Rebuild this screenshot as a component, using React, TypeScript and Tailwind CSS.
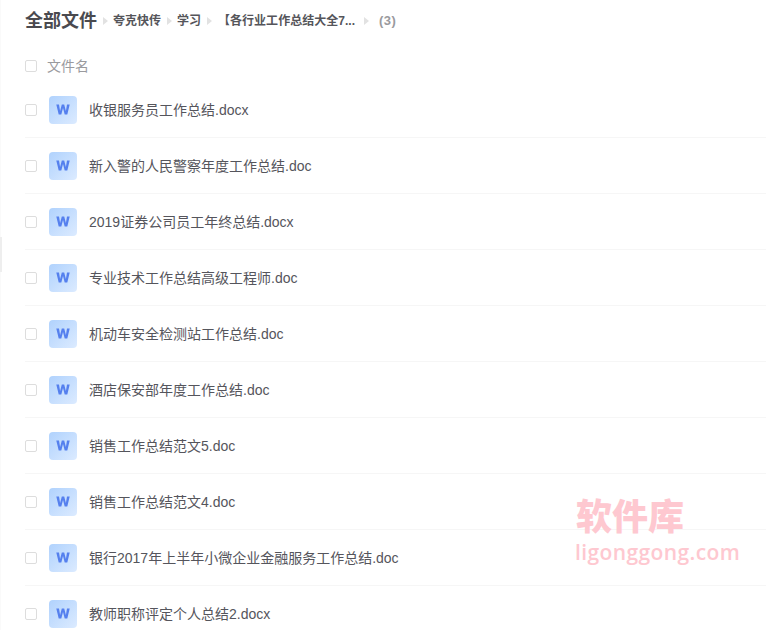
const files = [
  "收银服务员工作总结.docx",
  "新入警的人民警察年度工作总结.doc",
  "2019证券公司员工年终总结.docx",
  "专业技术工作总结高级工程师.doc",
  "机动车安全检测站工作总结.doc",
  "酒店保安部年度工作总结.doc",
  "销售工作总结范文5.doc",
  "销售工作总结范文4.doc",
  "银行2017年上半年小微企业金融服务工作总结.doc",
  "教师职称评定个人总结2.docx",
];

const font = { fontFamily: '"Liberation Sans", "Noto Sans CJK SC", sans-serif' };

function Sep({ className }: { className: string }) {
  return <span className={`h-0 w-0 border-y-[4px] border-l-[5px] border-y-transparent border-l-[#e2e2e2] ${className}`} />;
}

function Box() {
  return <span className="h-3 w-3 shrink-0 rounded-[2px] border border-[#dddddd] bg-white" />;
}

function WordIcon() {
  return (
    <span className="flex h-7 w-7 shrink-0 items-center justify-center rounded-[4px] bg-gradient-to-br from-[#b0d2fd] to-[#dcebff]">
      <svg width="14" height="11" viewBox="0 0 14 11">
        <path d="M0.3 0.5H3L4.1 7L5.8 0.5H8.2L9.9 7L11 0.5H13.7L11.3 10.5H8.7L7 4L5.3 10.5H2.7Z" fill="#5580ee" />
      </svg>
    </span>
  );
}

export default function App() {
  return (
    <div className="relative h-[630px] w-[766px] overflow-hidden bg-white pl-[25px] text-[#555]" style={font}>
      <div className="absolute left-0 top-0 h-full w-[1px] bg-[#fafafa]" />
      <div className="absolute left-0 top-[237px] h-[35px] w-[2px] bg-[#eeeeee]" />
      <div className="flex h-[42px] items-center">
        <span className="text-[18px] font-bold text-[#4a4a4f]">全部文件</span>
        <Sep className="ml-[6px] mr-[5px]" />
        <span className="text-[12px] font-bold text-[#55555a]">夸克快传</span>
        <Sep className="ml-[6px] mr-[5px]" />
        <span className="text-[12px] font-bold text-[#55555a]">学习</span>
        <Sep className="ml-[6px] mr-[6px]" />
        <span className="text-[12px] font-bold tracking-[0.02px] text-[#55555a]">【各行业工作总结大全7...</span>
        <Sep className="ml-[9px]" />
        <span className="ml-[10px] text-[13px] font-bold tracking-[0.5px] text-[#9a9a9e]">(3)</span>
      </div>
      <div className="flex h-[47px] items-center pt-[1px]">
        <Box />
        <span className="ml-[10px] text-[14px] text-[#9a9a9e]">文件名</span>
      </div>
      <div className="-mt-[7px]">
        {files.map((name) => (
          <div key={name} className="flex h-[56px] items-center border-b border-[#f6f6f6]">
            <Box />
            <span className="ml-[12px]"><WordIcon /></span>
            <span className="ml-[12px] pt-[2px] text-[14px] text-[#55555c]">{name}</span>
          </div>
        ))}
      </div>
      <div className="absolute left-[575px] top-[496px] flex w-[175px] flex-col text-[#fec8d0]">
        <span className="ml-[1px] text-[36px] leading-[44px] font-black">软件库</span>
        <span className="text-[21px] leading-[24px] font-semibold tracking-[0.4px]" style={{ fontFamily: '"Open Sans", sans-serif' }}>ligonggong.com</span>
      </div>
    </div>
  );
}
